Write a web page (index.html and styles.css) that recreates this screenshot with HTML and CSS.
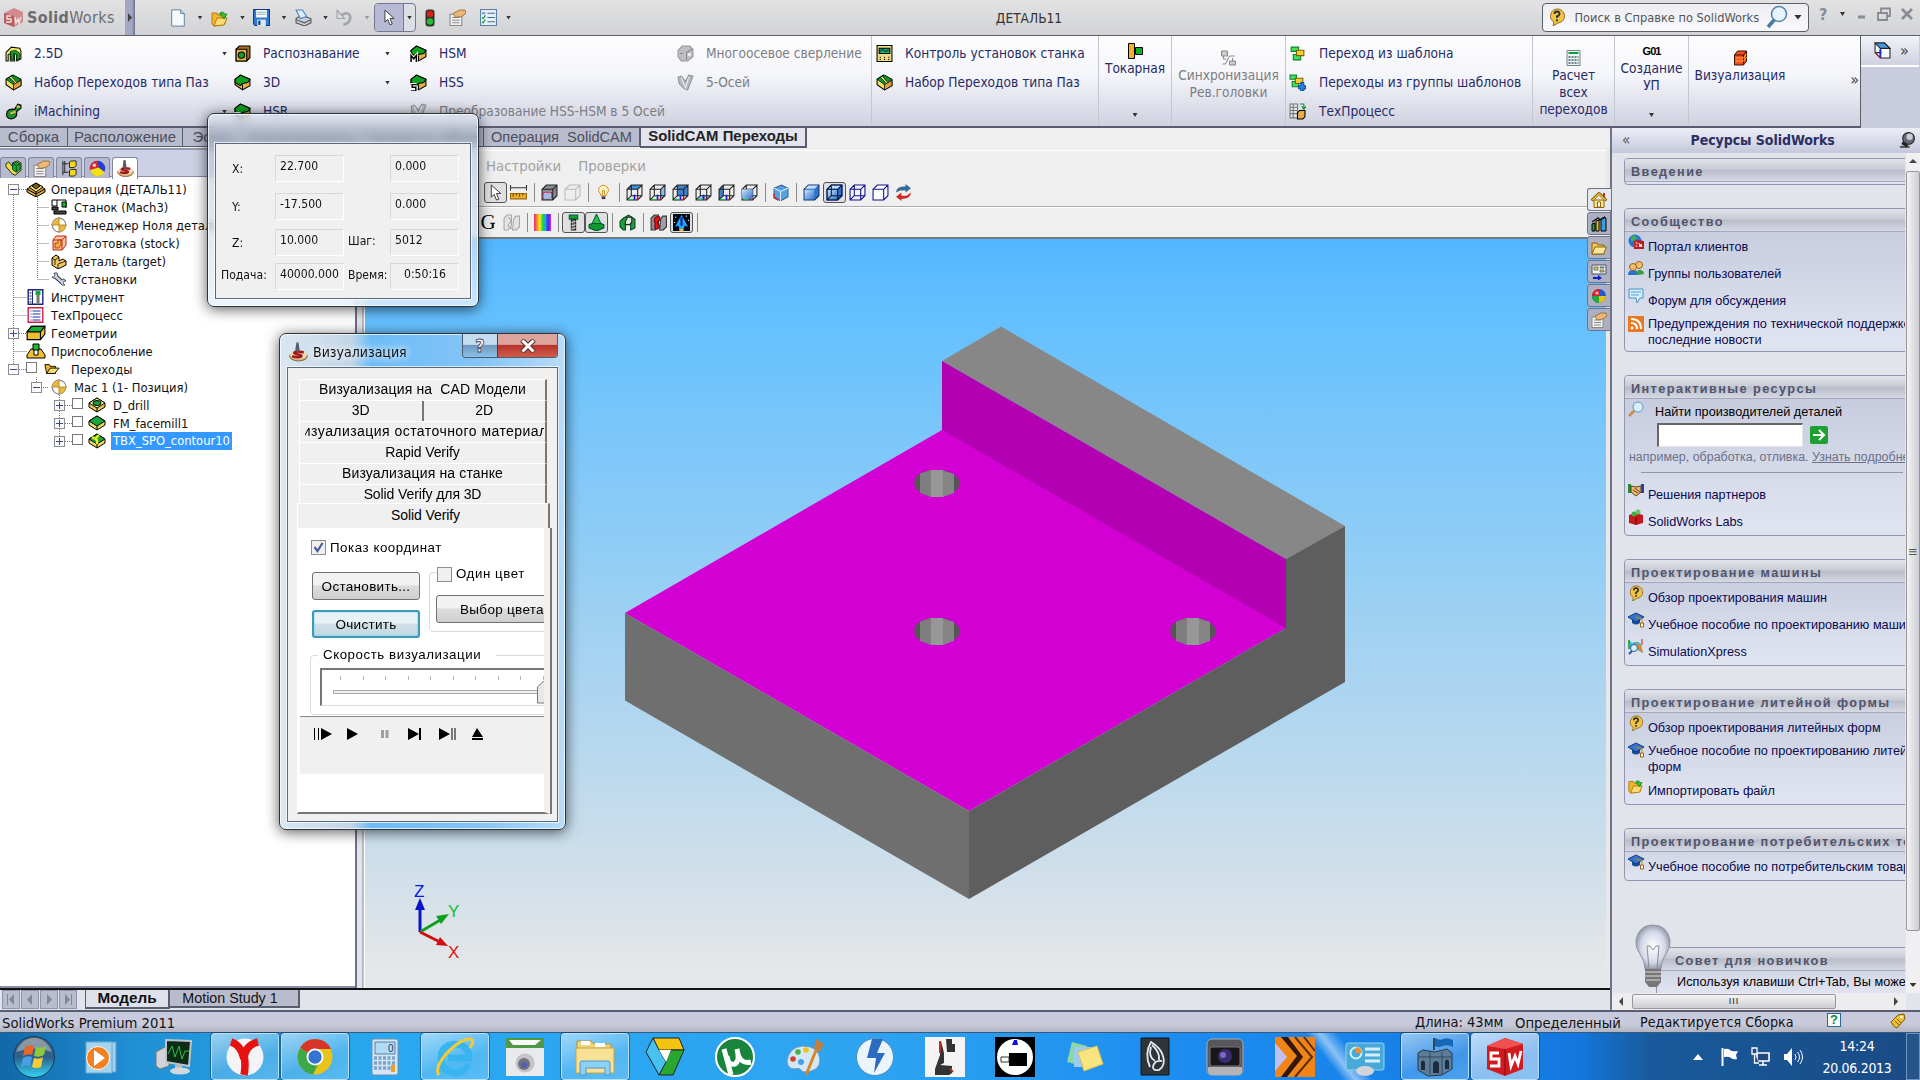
FILE: index.html
```html
<!DOCTYPE html>
<html lang="ru">
<head>
    <meta charset="UTF-8">
    <meta name="viewport" content="width=device-width, initial-scale=1.0">
    <title>ДЕТАЛЬ11</title>
    <link rel="stylesheet" href="styles.css">
</head>
<body>
    <!-- icons -->
    <svg class="sprite">
        <defs>
            <linearGradient id="gBlue" x1="0" y1="0" x2="1" y2="1"><stop offset="0" stop-color="#cfe6fb"/><stop offset="1" stop-color="#2f74c8"/></linearGradient>
            <linearGradient id="gTop" x1="0" y1="0" x2="0" y2="1"><stop offset="0" stop-color="#56646f"/><stop offset=".5" stop-color="#2b5f8c"/><stop offset="1" stop-color="#35d6f5"/></linearGradient>
            <linearGradient id="gRain"><stop offset="0" stop-color="#e0208a"/><stop offset=".2" stop-color="#ff9a10"/><stop offset=".35" stop-color="#f4f020"/><stop offset=".5" stop-color="#30d040"/><stop offset=".68" stop-color="#20a0f0"/><stop offset=".82" stop-color="#3030e0"/><stop offset="1" stop-color="#e020e0"/></linearGradient>
            <radialGradient id="gBulb"><stop offset="0" stop-color="#fff"/><stop offset=".7" stop-color="#d4d8e8"/><stop offset="1" stop-color="#9aa0b0"/></radialGradient>
        </defs>
        <symbol id="cam" viewBox="0 0 16 16"><path d="M1 5l5-4 9 4v6l-7 4-7-5z" fill="#e8b040" stroke="#000"/><path d="M1 5l5-4 9 4-2 3-5 1-2 2-5-3z" fill="#12a020" stroke="#000"/><path d="M8 10v5" stroke="#000"/></symbol>
        <symbol id="cam25" viewBox="0 0 16 16"><path d="M1 7l5-5 8 1 1 3v7l-4 2V8L9 7v8H5V8L3 9v6H1z" fill="#f3ec70" stroke="#111"/><path d="M5 6l5-1 4 3v5l-3 1V9L8 8v6H6z" fill="#12a020" stroke="#111" stroke-width=".7"/></symbol>
        <symbol id="slot" viewBox="0 0 16 16"><path d="M1 5l6-4 8 4v6l-7 4-7-5z" fill="#f3e060" stroke="#000"/><path d="M1 5l3-2 5 5-1 2zM6 2l2-1 7 4-4 3z" fill="#109030" stroke="#000" stroke-width=".6"/><path d="M8 10v5l7-4V6z" fill="#e0a040" stroke="#000" stroke-width=".7"/></symbol>
        <symbol id="imach" viewBox="0 0 16 16"><path d="M2 8q2-3 7-2l3-5 3 1v3l-4 3q1 6-5 7-6 0-4-7z" fill="#18902c" stroke="#000"/><path d="M5 10l5-2M11 3l3 1" stroke="#e8b848" stroke-width="2"/></symbol>
        <symbol id="recog" viewBox="0 0 16 16"><path d="M2 4l3-3h10v11l-3 3H2z" fill="#a8701c" stroke="#000"/><path d="M2 4h10v11H2z" fill="#e8ad48" stroke="#000"/><circle cx="7" cy="9.500" r="3" fill="#12a020" stroke="#000"/></symbol>
        <symbol id="camM" viewBox="0 0 16 16"><use href="#cam"/><path d="M1 16v-6l2.500 3L6 10v6" stroke="#fff" stroke-width="3" fill="none"/><path d="M1 16v-6l2.500 3L6 10v6" stroke="#000" stroke-width="1.400" fill="none"/></symbol>
        <symbol id="camS" viewBox="0 0 16 16"><use href="#cam"/><path d="M6 10H2v2.500h3.500V16H1" stroke="#fff" stroke-width="3" fill="none"/><path d="M6 10H2v2.500h3.500V16H1" stroke="#000" stroke-width="1.300" fill="none"/></symbol>
        <symbol id="gcam" viewBox="0 0 16 16"><path d="M1 5l4-4h7l3 3v7l-5 4H4l-3-4z" fill="#bdbfc2" stroke="#94969a"/><path d="M9 7l5-3M9 7v7M3 8h3" stroke="#87898d"/><circle cx="11.500" cy="9" r="1.500" fill="#eee"/></symbol>
        <symbol id="gaxis" viewBox="0 0 16 16"><path d="M1 3l3-1 4 5 3-6 4 1-3 8-2 5-3-1-5-5z" fill="#b9bbc0" stroke="#8f9196"/><path d="M4 3l4 10 3-10" stroke="#e8e8ec" fill="none"/></symbol>
        <symbol id="panel" viewBox="0 0 16 16"><path d="M1 .5h14v15H1z" fill="#f0dc80" stroke="#000"/><path d="M3 3h10v5H3z" fill="#18b060" stroke="#000"/><path d="M4 11v3M8 11v3M12 11v3" stroke="#000" stroke-dasharray="1 1"/><path d="M4 6l2-2 3 2 3-1" stroke="#034" fill="none"/></symbol>
        <symbol id="turn" viewBox="0 0 16 16"><path d="M1 0.500h6v15H1z" fill="#f0b030" stroke="#000"/><path d="M8 4.500h7v7H8z" fill="#10b020" stroke="#000"/></symbol>
        <symbol id="sync" viewBox="0 0 16 16"><path d="M1 1h6v5H1zM9 11h6v4H9z" fill="#ccc" stroke="#888"/><path d="M3 6v3h3M14 6H9l-4 8H2M12 8v3" stroke="#888" fill="none"/></symbol>
        <symbol id="tpl" viewBox="0 0 16 16"><path d="M2 2h7v4H2zM4 9h7v5H4z" fill="#40e060" stroke="#108030"/><path d="M7 5h7v5H7z" fill="#f0d030" stroke="#806000"/></symbol>
        <symbol id="tplg" viewBox="0 0 16 16"><path d="M1 1h6v4H1zM3 7h6v5H3z" fill="#40e060" stroke="#108030"/><path d="M6 4h7v5H6z" fill="#f0d030" stroke="#806000"/><path d="M9 11h2V8h3v3h2v3h-2v2h-3v-2H9z" fill="#2080e0" stroke="#02408a" stroke-width=".8"/></symbol>
        <symbol id="tech" viewBox="0 0 16 16"><path d="M1 1h7v13H1zM1 4h7M1 7h7M1 10h7M4 1v13" fill="#e4e6ea" stroke="#777"/><path d="M8 9l2-2h5v6l-2 2H8z" fill="#e8ad48" stroke="#000"/><path d="M10 1h4v4M12 3l2 3 2-3" stroke="#109030" fill="none"/></symbol>
        <symbol id="calc" viewBox="0 0 16 16"><path d="M1.500.500h13v15h-13z" fill="#eef4f4" stroke="#70888c"/><path d="M3 2h10v2H3z" fill="#109a40"/><path d="M3 7h10M3 10h10M3 13h10" stroke="#406070" stroke-width="1.600" stroke-dasharray="2 1"/></symbol>
        <symbol id="vis" viewBox="0 0 16 16"><path d="M2 5l3-4h9v10l-3 4H2z" fill="#f05020" stroke="#401000"/><path d="M2 5h9l3-4M11 5v10" stroke="#401000" fill="none"/><path d="M3 8h8l3-4M3 11h8l3-4" stroke="#ffb030" fill="none"/></symbol>
        <symbol id="doc" viewBox="0 0 16 20"><path d="M1 1h10l4 4v14H1z" fill="#f4faff" stroke="#5a7896"/><path d="M11 1v4h4" fill="#c8dcec" stroke="#5a7896"/></symbol>
        <symbol id="open" viewBox="0 0 18 18"><path d="M1 4h5l1 2h7v9l-11 2-2-2z" fill="#f0b830" stroke="#b07808"/><path d="M3 17l3-8h10l-3 7z" fill="#fbdc70" stroke="#b07808"/><path d="M8 5q3-4 6 0h2l-3 5-4-5h2" fill="#30c030" stroke="#107010" stroke-width=".6"/></symbol>
        <symbol id="save" viewBox="0 0 16 16"><path d="M.5.500h15v15H2l-1.500-1.500z" fill="#2f7cd0" stroke="#103c80"/><path d="M3 1h10v7H3z" fill="#fff"/><path d="M4 3h8M4 5h8" stroke="#8ab"/><path d="M4 10h8v6H4z" fill="#dde8f4"/><path d="M5 11h2v4H5z" fill="#123a70"/></symbol>
        <symbol id="print" viewBox="0 0 16 16"><path d="M1 9l5-3 9 3v4l-6 3-8-3z" fill="#c8ccd4" stroke="#555"/><path d="M5 9L1 1h6l4 6z" fill="#d8ecff" stroke="#5080b0"/><path d="M1 10l8 3 6-3" stroke="#555" fill="none"/></symbol>
        <symbol id="undo" viewBox="0 0 16 16"><path d="M7 15q8-3 6-9-2-4-8 0" fill="none" stroke="#a2a4a8" stroke-width="2.400"/><path d="M1 1v8h7z" fill="#dcdde0" stroke="#a0a2a6"/></symbol>
        <symbol id="cursor" viewBox="0 0 12 18"><path d="M1 1v13l3-3 2.500 6 2.500-1-2.500-6H11z" fill="#fff" stroke="#333"/></symbol>
        <symbol id="light" viewBox="0 0 10 18"><rect x=".5" y=".5" width="9" height="17" rx="3" fill="#303030"/><circle cx="5" cy="5" r="3.200" fill="#e02010"/><circle cx="5" cy="12.500" r="3.200" fill="#20c030"/></symbol>
        <symbol id="props" viewBox="0 0 16 16"><path d="M1 5h11v10.500H1z" fill="#f2f2f2" stroke="#888"/><path d="M3 8h7M3 10.500h7M3 13h7" stroke="#888"/><path d="M4 4l6-3h5l1 3-4 3-6 1z" fill="#eab878" stroke="#8a5a20" stroke-width=".7"/></symbol>
        <symbol id="opts" viewBox="0 0 16 16"><path d="M.5.500h15v15H.5z" fill="#e6f0fa" stroke="#5a7ca0"/><path d="M7 4h7M7 8h7M7 12h7" stroke="#48688c"/><path d="M2 3h3v2H2z" fill="#7898c0"/><path d="M2 8l1 1 2-3M2 12l1 1 2-3" stroke="#109030" fill="none"/></symbol>
        <symbol id="qball" viewBox="0 0 16 18"><path d="M8 1a7 7 0 0 1 1 14l-5 3 1-4A7 7 0 0 1 8 1z" fill="#f2c444" stroke="#94701c"/><path d="M5.500 6q0-2.500 2.500-2.500T10.500 6Q10.500 7.500 8 8.500V10M8 11.200v2" stroke="#333" stroke-width="1.900" fill="none"/></symbol>
        <symbol id="lens" viewBox="0 0 22 24"><path d="M9 14l-7 8" stroke="#4a7a9c" stroke-width="3.500"/><circle cx="13" cy="9" r="7.500" fill="#e6f4fc" stroke="#5888a8" stroke-width="1.600"/></symbol>
        <symbol id="iso" viewBox="0 0 16 16"><path d="M1 1h9l5 5v9H6l-5-5z" fill="#f8fbff" stroke="#222"/><path d="M1 1h9l5 5H6z" fill="#4898e0" stroke="#222"/><path d="M6 6v9M1 10h6" fill="none" stroke="#222"/><path d="M6 7v8" stroke="#1030e0" stroke-width="1.800"/><path d="M1 10l5 5" stroke="#c02020"/></symbol>
        <symbol id="base" viewBox="0 0 16 16"><path d="M1 5h10v10H1zM1 5l4-4h10l-4 4M15 1v10l-4 4M5 1v10h10M5 11l-4 4" fill="none" stroke="#222" stroke-width="1"/><path d="M8 10v5" stroke="#1020e0" stroke-width="1.600"/><path d="M2 14.500h5" stroke="#10c040"/><path d="M9 14.500l3-1" stroke="#e02020"/></symbol>
        <symbol id="vTop" viewBox="0 0 16 16"><path d="M1 5l4-4h10l-4 4z" fill="#3f8fdc"/><use href="#base"/></symbol>
        <symbol id="vRight" viewBox="0 0 16 16"><path d="M11 5l4-4v10l-4 4z" fill="#8cc0ee"/><use href="#base"/></symbol>
        <symbol id="vBack" viewBox="0 0 16 16"><path d="M5 1h10v10H5z" fill="#3f80c8"/><use href="#base"/></symbol>
        <symbol id="vBot" viewBox="0 0 16 16"><path d="M1 15l4-4h10l-4 4z" fill="#8cc0ee"/><use href="#base"/></symbol>
        <symbol id="vLeft" viewBox="0 0 16 16"><path d="M1 5l4-4v10l-4 4z" fill="#3f80c8"/><use href="#base"/></symbol>
        <symbol id="vFront" viewBox="0 0 16 16"><use href="#base"/><path d="M1 5h10v9H1z" fill="url(#gBlue)"/></symbol>
        <symbol id="shade" viewBox="0 0 16 16"><path d="M1 5l4-4h10v10l-4 4H1z" fill="#2f74c8" stroke="#10306c"/><path d="M1.500 5.500h9v9h-9z" fill="url(#gBlue)"/><path d="M2 4.500l3-3h9l-3 3z" fill="#c4e0f8"/></symbol>
        <symbol id="shadeE" viewBox="0 0 16 16"><use href="#shade"/><path d="M1 5h10v10H1zM1 5l4-4h10v10l-4 4M11 5l4-4M5 1v10h10M5 11l-4 4" fill="none" stroke="#08184c"/></symbol>
        <symbol id="wire" viewBox="0 0 16 16"><path d="M1 5h10v10H1zM1 5l4-4h10v10l-4 4M11 5l4-4M5 1v10h10M5 11l-4 4" fill="#fff" fill-opacity=".6" stroke="#10108c"/></symbol>
        <symbol id="hid" viewBox="0 0 16 16"><path d="M1 5h10v10H1zM1 5l4-4h10v10l-4 4M11 5l4-4" fill="#fff" stroke="#10108c"/></symbol>
        <symbol id="stockR" viewBox="0 0 16 16"><path d="M1 5l4-4h10v10l-4 4H1z" fill="#8a8c94" stroke="#222"/><path d="M1 5h10v10M11 5l4-4" stroke="#222" fill="none"/><path d="M2 8h8v6H2z" fill="#a8b8e0"/><path d="M2 8h8l4-3M2 14V8M10 8v6" stroke="#d02040" stroke-dasharray="2 1" fill="none"/></symbol>
        <symbol id="stockG" viewBox="0 0 16 16"><path d="M1 5h10v10H1zM1 5l4-4h10v10l-4 4M11 5l4-4" fill="#eee" stroke="#bbb"/></symbol>
        <symbol id="isoB" viewBox="0 0 16 16"><path d="M2 4l7-3 6 3v8l-7 4-6-4z" fill="#5aa0dc" stroke="#2a6098"/><path d="M2 4l6 3 7-3M8 7v9" stroke="#d4ecff" fill="none"/><path d="M2 9v4l4 2" fill="none" stroke="#c03040" stroke-width="1.500"/></symbol>
        <symbol id="ruler" viewBox="0 0 16 16"><path d="M.5 1v5M15.500 1v5M1 3.500h14" stroke="#333"/><path d="M.5 9h15v5H.5z" fill="#eeb028" stroke="#9a6808"/><path d="M3 9v3M6 9v2M9 9v3M12 9v2" stroke="#704800"/></symbol>
        <symbol id="bulb" viewBox="0 0 16 18"><path d="M5 12q0-2-2-4a5.200 5.200 0 1 1 10 0q-2 2-2 4z" fill="#fff4c0" stroke="#c88c20"/><path d="M7 11V7h2v4" fill="none" stroke="#c88c20"/><path d="M6 13h4v3H6z" fill="#444"/></symbol>
        <symbol id="swap" viewBox="0 0 16 16"><path d="M1 8q0-6 9-6V0l5 4-5 4V6H5z" fill="#386c98"/><path d="M15 8q0 6-9 6v2l-5-4 5-4v3h5z" fill="#d02828"/></symbol>
        <symbol id="red" viewBox="0 0 16 16"><path d="M1 4l3-3h4v10l-3 4H1z" fill="#8e8e94" stroke="#333"/><path d="M10 5l2-3h3.500v10l-3 3H9z" fill="#a0a0a4" stroke="#333"/><path d="M5 3q6-2 4 3-4 2 0 5-1 4-4 3-1-3 0-5-2-3 0-6z" fill="#e01818" stroke="#700"/></symbol>
        <symbol id="gsim" viewBox="0 0 16 16"><path d="M1 4l3-3h4v10l-3 4H1zM10 5l2-3h3.500v10l-3 3H9zM5 3q4 3 1 6t3 5" fill="#e4e4e4" stroke="#a8a8a8"/></symbol>
        <symbol id="bolt" viewBox="0 0 16 16"><path d="M4 1h8v4H4z" fill="#10a030" stroke="#054"/><path d="M6 5h4v10H6z" fill="#666" stroke="#222"/><path d="M6 8l4-1M6 11l4-1M6 14l4-1" stroke="#ccc"/></symbol>
        <symbol id="cone" viewBox="0 0 16 16"><path d="M8 0l5 11H3z" fill="#28c040" stroke="#064"/><path d="M1 10l3-1h8l3 1v3l-7 3-7-3z" fill="#109830" stroke="#053"/></symbol>
        <symbol id="mold" viewBox="0 0 16 16"><path d="M1 7l3-3 5-3 6 4v8l-4 2V9H6v6H4l-3-3z" fill="#20a038" stroke="#042"/><path d="M6 7l2-4h4v5l-2 2H6z" fill="#e4e4e4" stroke="#222"/></symbol>
        <symbol id="rocket" viewBox="0 0 16 16"><path d="M0 0h16v16H0z" fill="#000814"/><path d="M8 1l3 5 3 6-3-1-1 3H6l-1-3-3 1 3-6z" fill="#20a8f8"/><path d="M8 3v8" stroke="#1020a0" stroke-width="2"/><path d="M2 3h1M12 2h1M14 6h1M1 8h1" stroke="#fff"/><path d="M6 14h4v2H6z" fill="#f8b030"/></symbol>
        <symbol id="house" viewBox="0 0 16 16"><path d="M3 8h10v7.500H3z" fill="#fbe48c" stroke="#8a6410"/><path d="M.5 8.500L8 1.500l7.500 7" fill="none" stroke="#8a6410" stroke-width="3"/><path d="M1.500 8L8 2l6.500 6" fill="none" stroke="#f0c030" stroke-width="1.400"/><path d="M12 1h2v4h-2z" fill="#b03020"/><path d="M6.500 10h3v5h-3z" fill="#fff" stroke="#8a6410"/></symbol>
        <symbol id="books" viewBox="0 0 16 16"><path d="M1 8l3-1v8H1z" fill="#20a040" stroke="#000"/><path d="M5 5l3-1v11H5z" fill="#e8c030" stroke="#000"/><path d="M10 3l4-2 1 2v12h-5z" fill="#38a0e0" stroke="#000"/><path d="M1 6l6-4 2 2 5-3" stroke="#111" stroke-width="1.500" fill="none"/></symbol>
        <symbol id="folder" viewBox="0 0 16 16"><path d="M1 3h5l1 2h6v9H1z" fill="#f4c850" stroke="#8a6410"/><path d="M1 14l3-7h11.500l-3 7z" fill="#fce898" stroke="#8a6410"/></symbol>
        <symbol id="pal" viewBox="0 0 16 16"><path d="M1 1h14v9H1z" fill="#f4f6fa" stroke="#456"/><path d="M3 3h4v3H3zM9 3h4v1H9zM9 6h4v2H9z" fill="#e8d850" stroke="#345" stroke-width=".7"/><path d="M2 13h5v-2l4 3-4 2.500V15H2z" fill="#1020c0"/></symbol>
        <symbol id="ball" viewBox="0 0 16 16"><circle cx="8" cy="8" r="7" fill="#2858d0"/><path d="M8 8V1a7 7 0 0 0-7 7z" fill="#e02020"/><path d="M8 8H1a7 7 0 0 0 7 7z" fill="#20a838"/><path d="M8 8v7a7 7 0 0 0 7-7z" fill="#e8c020"/><circle cx="6" cy="5" r="1.600" fill="#fff" opacity=".7"/></symbol>
        <symbol id="ball3" viewBox="0 0 16 16"><circle cx="8" cy="8" r="7.300" fill="#2040d0"/><path d="M9 7L8 .7A7.300 7.300 0 0 0 1 9z" fill="#e82020"/><path d="M9 7L.8 9.500q2 6 7.500 6 5-1 6.500-4z" fill="#f4e010"/><circle cx="5" cy="5" r="1.600" fill="#fff" opacity=".8"/></symbol>
        <symbol id="solidcam" viewBox="0 0 18 18"><ellipse cx="9" cy="13" rx="8.300" ry="4.500" fill="#d8b880" stroke="#8a6840"/><ellipse cx="9" cy="11.500" rx="8" ry="4" fill="#f0dcc0"/><path d="M14 9.500q-8-2-9 .5 1 1 5 1.500 3 1 1 2-3 1-8-.5" fill="none" stroke="#a01818" stroke-width="2.400"/><path d="M7 0h2l1 7-2 3-2-3z" fill="#555c64"/></symbol>
        <symbol id="cfg" viewBox="0 0 18 18"><path d="M2 1v15M2 4h6M2 13h6M4 1v12" stroke="#222" fill="none"/><path d="M9 2l2-1h5v5l-2 2H9zM9 11l2-1h5v5l-2 2H9z" fill="#f4d820" stroke="#222"/></symbol>
        <symbol id="asm" viewBox="0 0 18 18"><path d="M1 4l3-2 4 5V3l5-2 4 2v8l-6 5-3-1-7-8z" fill="#f0d840" stroke="#222"/><path d="M8 4l4-2 4 2v6l-4 3-4-3z" fill="#18a838" stroke="#042"/><path d="M8 4l4 2v6M12 6l4-2" fill="none" stroke="#042"/></symbol>
        <symbol id="oper" viewBox="0 0 20 16"><path d="M1 8l9-5 9 5v3l-9 5-9-5z" fill="#d8a840" stroke="#000"/><path d="M1 8l9 5 9-5" stroke="#000" fill="none"/><path d="M3 6l7-4 7 4-7 5z" fill="#f4dc70" stroke="#000"/><path d="M6 5l4-3 4 3-4 3z" fill="#806010" stroke="#000"/><path d="M10 11v5" stroke="#000"/></symbol>
        <symbol id="machine" viewBox="0 0 16 16"><path d="M1 1h5v6H1zM6 1h9v8" fill="#fff" stroke="#000"/><path d="M11 3h4v5h-4z" fill="#10c030" stroke="#000"/><path d="M1 8h6v3H1zM3 12h12v3H3z" fill="#444" stroke="#000"/></symbol>
        <symbol id="zero" viewBox="0 0 14 14"><circle cx="7" cy="7" r="6" fill="#fffdf4" stroke="#8a8a94"/><path d="M7 7V1a6 6 0 0 0-6 6zM7 7v6a6 6 0 0 0 6-6z" fill="#e8b838"/><path d="M7 0v14M0 7h14" stroke="#a88020" stroke-width=".7"/></symbol>
        <symbol id="stock" viewBox="0 0 16 16"><path d="M2 5l3-4h10v9l-4 5H2z" fill="#f8c8a0" stroke="#c02010"/><path d="M2 5h9v10M11 5l4-4" fill="none" stroke="#c02010"/><path d="M4 8h3V5h3v5l-2 3H4z" fill="#f0b040" stroke="#c02010" stroke-width=".8"/></symbol>
        <symbol id="target" viewBox="0 0 16 16"><path d="M1 5l4-3 3 2v4l4-2 3 2v4l-8 4-6-4z" fill="#f0cc60" stroke="#000"/><path d="M1 5l3 2v5M4 7l4-3M7 11l8-3M7 11v5" stroke="#000" fill="none" stroke-width=".8"/></symbol>
        <symbol id="wrench" viewBox="0 0 16 16"><path d="M4 5l8 7" stroke="#333" stroke-width="4.500"/><path d="M6 2q2 2-1 5-3 1-4-1l2 0 1-2-1-2zM15 10l-2 0-1 2 2 2q-3 1-4-1t2-5q2 0 3 2z" fill="#c8d4e4" stroke="#333" stroke-width=".8"/><path d="M4 5l8 7" stroke="#c8d4e4" stroke-width="2.500"/></symbol>
        <symbol id="tool" viewBox="0 0 16 16"><path d="M.7.700h14.600v14.600H.7z" fill="#fff" stroke="#1c2480" stroke-width="1.400"/><path d="M5 1v14" stroke="#1c2480"/><path d="M2 4h2M2 7h2M2 10h2M2 13h2" stroke="#111"/><path d="M8 2h5v4H8z" fill="#18a838"/><path d="M9 6h3v8l-1.500 1L9 14z" fill="#777"/></symbol>
        <symbol id="list" viewBox="0 0 16 16"><path d="M.7.700h14.600v14.600H.7z" fill="#fff" stroke="#d02040" stroke-width="1.400"/><path d="M3 4h1M3 7h1M3 10h1M3 13h1M5 4h8M5 7h8M5 10h8M5 13h8" stroke="#1c2cb0"/></symbol>
        <symbol id="geom" viewBox="0 0 18 14"><path d="M1 6l4-5h12v7l-4 5H1z" fill="#e8c030" stroke="#000"/><path d="M1 6l4-5h12l-4 5z" fill="#18b030" stroke="#000"/><path d="M13 6v7" stroke="#000"/></symbol>
        <symbol id="fix" viewBox="0 0 20 16"><path d="M1 15v-3l4-6h3v6h4V6h3l4 6v3z" fill="#f0c030" stroke="#000"/><path d="M7 1h6v6H7z" fill="#18c030" stroke="#000"/></symbol>
        <symbol id="fopen" viewBox="0 0 18 14"><path d="M1 2h5l1 2h6v8H3z" fill="#e8b830" stroke="#000"/><path d="M3 12l4-6h10l-5 6z" fill="#fce070" stroke="#000"/></symbol>
        <symbol id="drill" viewBox="0 0 18 16"><path d="M1 6l8-5 8 5v4l-8 5-8-5z" fill="#e8c850" stroke="#000"/><path d="M1 6l8-5 8 5-8 5z" fill="#f4ec90" stroke="#000"/><ellipse cx="9" cy="6" rx="4" ry="2.500" fill="#18a030" stroke="#000"/><path d="M9 11v4" stroke="#000"/></symbol>
        <symbol id="face" viewBox="0 0 18 16"><path d="M1 6l8-5 8 5v4l-8 5-8-5z" fill="#f0d860" stroke="#000"/><path d="M1 6l8-5 8 5-8 5z" fill="#18a840" stroke="#000"/><path d="M9 11v4" stroke="#000"/></symbol>
        <symbol id="contour" viewBox="0 0 18 16"><use href="#face"/><path d="M4 4l5 3v4M11 2L7 6" stroke="#f4f020" stroke-width="2.200" fill="none"/></symbol>
        <symbol id="portal" viewBox="0 0 16 16"><circle cx="7" cy="7" r="6.500" fill="#2878c8"/><path d="M3 3q4-3 6 1-3 4-6 3z" fill="#40b050"/><path d="M6 7l4-1 6 1v8H6z" fill="#b81c20"/><path d="M7.500 9h2M7.500 12h2M11 9l1 4 1-3 1 3" stroke="#fff" fill="none"/></symbol>
        <symbol id="users" viewBox="0 0 16 16"><path d="M0 14q0-5 5-5t5 5z" fill="#2870c8"/><path d="M8 12q2-4 5-3 3 1 3 4l-6 1z" fill="#30a040"/><circle cx="11" cy="4" r="3.500" fill="#f0c070" stroke="#a06010"/><circle cx="5" cy="6" r="3.500" fill="#f0c070" stroke="#a06010"/></symbol>
        <symbol id="chat" viewBox="0 0 16 16"><path d="M1 1h14v9h-3l-3 5-1-5H1z" fill="#d4ecfc" stroke="#4a94cc"/><path d="M3 4h10M3 7h8" stroke="#5aa0d4"/></symbol>
        <symbol id="rss" viewBox="0 0 16 16"><path d="M0 0h16v16H0z" fill="#ea7820"/><circle cx="4" cy="12" r="1.500" fill="#fff"/><path d="M3 7q6 0 6 6M3 3q10 0 10 10" stroke="#fff" stroke-width="2" fill="none"/></symbol>
        <symbol id="find" viewBox="0 0 16 16"><path d="M1 15l6-6" stroke="#c89040" stroke-width="2.500"/><circle cx="10" cy="6" r="5" fill="#d8f0fc" stroke="#6098c0"/></symbol>
        <symbol id="hands" viewBox="0 0 16 14"><path d="M0 1h3v9H0z" fill="#20903c"/><path d="M13 1h3v9h-3z" fill="#2048b0"/><path d="M3 3l5 1 5-1v6l-5 4-5-4z" fill="#e8b878" stroke="#6a4010"/><path d="M5 7l5 3M7 5l5 4" stroke="#6a4010"/></symbol>
        <symbol id="labs" viewBox="0 0 16 16"><path d="M1 6l7-2 7 2v8l-7 2-7-2z" fill="#c8181c"/><path d="M8 8v8" stroke="#700"/><circle cx="6" cy="5" r="2.500" fill="#38b048"/><circle cx="10" cy="3" r="2.500" fill="#60c868"/></symbol>
        <symbol id="cap" viewBox="0 0 16 16"><path d="M4 6v5q4 3 8 0V6z" fill="#1c4c9c"/><path d="M0 5l8-4 8 4-8 5z" fill="#3474cc" stroke="#123a7a"/><path d="M8 5l6 2v6" stroke="#d09020" fill="none"/><path d="M12.500 11h3v4h-3z" fill="#fff" stroke="#a06010"/></symbol>
        <symbol id="sim" viewBox="0 0 16 16"><path d="M1 1l3 3q5-3 9 1l2 9-4-2Q6 6 2 10z" fill="#40b8c8"/><path d="M8 4q5 0 7 10l-4-3z" fill="#f08020"/><path d="M1 1v9" stroke="#10a030" stroke-width="1.600"/><path d="M14 0v6" stroke="#c02020"/><circle cx="6" cy="9" r="3.500" fill="#d8f0fc" stroke="#2858a0"/><path d="M1 15l3-3" stroke="#2858a0" stroke-width="2"/></symbol>
        <symbol id="pin" viewBox="0 0 16 16"><path d="M1 14h9" stroke="#555" stroke-width="2"/><circle cx="9" cy="6" r="5.500" fill="#666a74" stroke="#222"/><circle cx="10" cy="4.500" r="3" fill="#c8ccd4"/><path d="M3 10l5 3" stroke="#222" stroke-width="3"/></symbol>
    </svg>

    <div class="titlebar">
        <div class="logo">
            <svg width="21" height="21" viewBox="0 0 21 21"><path d="M1 6l10-5 9 4v10l-9 5-10-4z" fill="#d08c90"/><path d="M1 6l10 3v11L1 16z" fill="#b85c62"/><path d="M8 9H4v3h4v3H3M12 10l1 6 2-4 1 4 2-6" stroke="#f4e0e0" stroke-width="1.400" fill="none"/></svg>
            <span><b>Solid</b>Works</span>
        </div>
        <div class="grip"><i class="ar"></i></div>
        <div class="quick">
            <svg width="16" height="18"><use href="#doc"/></svg><i class="dd"></i>
            <svg width="18" height="18"><use href="#open"/></svg><i class="dd"></i>
            <svg width="17" height="17"><use href="#save"/></svg><i class="dd"></i>
            <svg width="17" height="17"><use href="#print"/></svg><i class="dd"></i>
            <svg width="17" height="17"><use href="#undo"/></svg><i class="dd dim"></i>
        </div>
        <div class="select"><span><svg width="11" height="17"><use href="#cursor"/></svg></span><em><i class="dd"></i></em></div>
        <div class="quick2">
            <svg width="10" height="18"><use href="#light"/></svg>
            <svg width="17" height="17"><use href="#props"/></svg>
            <svg width="17" height="17"><use href="#opts"/></svg>
            <i class="dd"></i>
        </div>
        <div class="doc-title">ДЕТАЛЬ11</div>
        <div class="search"><svg width="16" height="18"><use href="#qball"/></svg><span>Поиск в Справке по SolidWorks</span><svg width="22" height="24"><use href="#lens"/></svg><i class="dd"></i></div>
        <div class="winbtn"><b>?</b><i class="dd"></i>
            <svg width="10" height="14" viewBox="0 0 10 14"><path d="M1 10h7" stroke="#888a96" stroke-width="3"/></svg>
            <svg width="14" height="14" viewBox="0 0 14 14"><path d="M4 5V1.500h9V9H10M1 6h9v7H1z" fill="none" stroke="#888a96" stroke-width="1.800"/></svg>
            <svg width="12" height="12" viewBox="0 0 12 12"><path d="M1 1l10 10M11 1L1 11" stroke="#888a96" stroke-width="2.600"/></svg>
        </div>
    </div>

    <div class="ribbon-row">
        <div class="ribbon">
            <div class="col c1">
                <div class="cmd"><svg><use href="#cam25"/></svg><span>2.5D</span><i class="dd"></i></div>
                <div class="cmd"><svg><use href="#slot"/></svg><span>Набор Переходов типа Паз</span></div>
                <div class="cmd"><svg><use href="#imach"/></svg><span>iMachining</span><i class="dd"></i></div>
            </div>
            <div class="col c2">
                <div class="cmd"><svg><use href="#recog"/></svg><span>Распознавание</span><i class="dd"></i></div>
                <div class="cmd"><svg><use href="#cam"/></svg><span>3D</span><i class="dd"></i></div>
                <div class="cmd"><svg><use href="#camS"/></svg><span>HSR</span></div>
            </div>
            <div class="col c3">
                <div class="cmd"><svg><use href="#camM"/></svg><span>HSM</span></div>
                <div class="cmd"><svg><use href="#camS"/></svg><span>HSS</span></div>
                <div class="cmd off"><svg><use href="#gaxis"/></svg><span>Преобразование HSS-HSM в 5 Осей</span></div>
            </div>
            <div class="col c4">
                <div class="cmd off"><svg><use href="#gcam"/></svg><span>Многоосевое сверление</span></div>
                <div class="cmd off"><svg><use href="#gaxis"/></svg><span>5-Осей</span></div>
            </div>
            <div class="col c5 sep">
                <div class="cmd"><svg><use href="#panel"/></svg><span>Контроль установок станка</span></div>
                <div class="cmd"><svg><use href="#slot"/></svg><span>Набор Переходов типа Паз</span></div>
            </div>
            <div class="big sep c6"><svg><use href="#turn"/></svg><span>Токарная</span><i class="dd"></i></div>
            <div class="big low sep c7 off"><svg><use href="#sync"/></svg><span>Синхронизация<br>Рев.головки</span></div>
            <div class="col sep c8">
                <div class="cmd"><svg><use href="#tpl"/></svg><span>Переход из шаблона</span></div>
                <div class="cmd"><svg><use href="#tplg"/></svg><span>Переходы из группы шаблонов</span></div>
                <div class="cmd"><svg><use href="#tech"/></svg><span>ТехПроцесс</span></div>
            </div>
            <div class="big low sep c9"><svg><use href="#calc"/></svg><span>Расчет<br>всех<br>переходов</span></div>
            <div class="big sep c10"><strong>G01</strong><span>Создание<br>УП</span><i class="dd"></i></div>
            <div class="big low sep c11"><svg><use href="#vis"/></svg><span>Визуализация</span></div>
            <div class="more">»</div>
        </div>
        <div class="mini"><div class="mini-in"><svg width="17" height="17"><use href="#iso"/></svg><span>»</span></div></div>
    </div>

    <div class="main">
        <div class="work">
            <div class="tabs">
                <span class="t1">Сборка</span><span class="t2">Расположение</span><span class="t3">Эскиз</span><span class="t4">Анализировать</span><span class="t5">Продукты Office</span><span class="t6">Операция&nbsp; SolidCAM</span><span class="on">SolidCAM Переходы</span>
            </div>
            <div class="panes">
                <div class="left">
                    <div class="ptabs">
                        <span><svg><use href="#asm"/></svg></span><span><svg><use href="#props"/></svg></span><span><svg><use href="#cfg"/></svg></span><span><svg><use href="#ball3"/></svg></span><span class="on"><svg><use href="#solidcam"/></svg></span>
                    </div>
                    <div class="tree">
                        <svg class="guides" width="120" height="280" viewBox="0 0 120 280"><path d="M13.500 14v180M37.500 16v86M19 12.500h7M13.500 120.500h13M13.500 138.500h13M19 156.500h7M13.500 174.500h13M19 192.500h7M37.500 30.500h12M37.500 48.500h12M37.500 66.500h12M37.500 84.500h12M37.500 102.500h12M36.500 200v6M43 210.500h6M59.500 218v44M65 228.500h7M65 246.500h7M65 264.500h7"/></svg>
                        <div class="row"><i class="bx m"></i><svg class="i20"><use href="#oper"/></svg><span>Операция (ДЕТАЛЬ11)</span></div>
                        <div class="row l2"><svg><use href="#machine"/></svg><span>Станок (Mach3)</span></div>
                        <div class="row l2"><svg><use href="#zero"/></svg><span>Менеджер Ноля детали</span></div>
                        <div class="row l2"><svg><use href="#stock"/></svg><span>Заготовка (stock)</span></div>
                        <div class="row l2"><svg><use href="#target"/></svg><span>Деталь (target)</span></div>
                        <div class="row l2"><svg><use href="#wrench"/></svg><span>Установки</span></div>
                        <div class="row l1"><svg><use href="#tool"/></svg><span>Инструмент</span></div>
                        <div class="row l1"><svg><use href="#list"/></svg><span>ТехПроцесс</span></div>
                        <div class="row"><i class="bx p"></i><svg class="i20"><use href="#geom"/></svg><span>Геометрии</span></div>
                        <div class="row l1"><svg class="i20"><use href="#fix"/></svg><span>Приспособление</span></div>
                        <div class="row"><i class="bx m"></i><i class="cb"></i><svg><use href="#fopen"/></svg><span class="far">Переходы</span></div>
                        <div class="row mac"><i class="bx m"></i><svg><use href="#zero"/></svg><span>Mac 1 (1- Позиция)</span></div>
                        <div class="row l3"><i class="bx p"></i><i class="cb"></i><svg class="i18"><use href="#drill"/></svg><span>D_drill</span></div>
                        <div class="row l3"><i class="bx p"></i><i class="cb"></i><svg class="i18"><use href="#face"/></svg><span>FM_facemill1</span></div>
                        <div class="row l3"><i class="bx p"></i><i class="cb"></i><svg class="i18"><use href="#contour"/></svg><span class="sel">TBX_SPO_contour10</span></div>
                    </div>
                </div>
                <div class="split"></div>
                <div class="view">
                    <div class="menu"><span>Настройки</span><span>Проверки</span></div>
                    <div class="tools">
                        <span class="b dn"><svg class="cur"><use href="#cursor"/></svg></span><span class="b"><svg><use href="#ruler"/></svg></span><u></u>
                        <span class="b"><svg><use href="#stockR"/></svg></span><span class="b"><svg><use href="#stockG"/></svg></span><u></u>
                        <span class="b"><svg><use href="#bulb"/></svg></span><u></u>
                        <span class="b"><svg><use href="#vTop"/></svg></span><span class="b"><svg><use href="#vRight"/></svg></span><span class="b"><svg><use href="#vBack"/></svg></span><span class="b"><svg><use href="#vBot"/></svg></span><span class="b"><svg><use href="#vLeft"/></svg></span><span class="b"><svg><use href="#vFront"/></svg></span><u></u>
                        <span class="b"><svg><use href="#isoB"/></svg></span><u></u>
                        <span class="b"><svg><use href="#shade"/></svg></span><span class="b dn"><svg><use href="#shadeE"/></svg></span><span class="b"><svg><use href="#wire"/></svg></span><span class="b"><svg><use href="#hid"/></svg></span><span class="b"><svg><use href="#swap"/></svg></span>
                    </div>
                    <div class="tools second">
                        <span class="b g">G</span><span class="b"><svg><use href="#gsim"/></svg></span><u></u>
                        <span class="b"><svg viewBox="0 0 16 16"><path d="M0 0h16v16H0z" fill="url(#gRain)"/></svg></span><u></u>
                        <span class="b dn"><svg><use href="#bolt"/></svg></span><span class="b dn"><svg><use href="#cone"/></svg></span><u></u>
                        <span class="b"><svg><use href="#mold"/></svg></span><u></u>
                        <span class="b"><svg><use href="#red"/></svg></span><span class="b dn"><svg><use href="#rocket"/></svg></span><u></u>
                    </div>
                    <div class="scene">
                        <svg width="1242" height="749" viewBox="365 239 1242 749">
                            <path d="M1001 326.500L1345 526l-59 33L942 361z" fill="#878787"/>
                            <path d="M942 361l344 198v70L942 431z" fill="#b200b2"/>
                            <path d="M942 430l344 198-317 183-344-198z" fill="#d200d2"/>
                            <path d="M625 613l344 198v88L625 700.500z" fill="#6f6f6f"/>
                            <path d="M969 811l317-183v-69l59-33v156L969 899z" fill="#5e5e5e"/>
                            <g id="hole"><path d="M914 483l2-6 5-4 8-2.500 8-.5 9 .8 7 3 5 4 2 5-2 6-5 4-8 3-9 .7-8-.7-7-3-5-4z" fill="#555"/><path d="M920 473.500l11-3.500v27l-11-4z" fill="#7e7e7e"/><path d="M931 470h12v27h-12z" fill="#979797"/><path d="M943 470.500l11 3.500v19l-11 4z" fill="#858585"/></g>
                            <use href="#hole" y="148"/><use href="#hole" x="256" y="148"/>
                            <path d="M420 932v-24" stroke="#0a14c8" stroke-width="3"/><path d="M420 898l5 12h-10z" fill="#0a14c8"/>
                            <path d="M420 932l22-13" stroke="#10a020" stroke-width="3"/><path d="M449 914l-8 10-5-8z" fill="#10a020"/>
                            <path d="M420 932l22 11" stroke="#d01010" stroke-width="3"/><path d="M448 946l-12-1 4-8z" fill="#d01010"/>
                            <text x="414" y="897" class="ax" fill="#0a14e8">Z</text><text x="448" y="917" class="ax" fill="#10c030">Y</text><text x="448" y="958" class="ax" fill="#e01010">X</text>
                        </svg>
                    </div>
                </div>
            </div>
            <div class="btabs">
                <div class="nav">
                    <i><svg width="16" height="17" viewBox="0 0 16 17"><path d="M11 3v11L6 8.500zM4 3h1v11H4z"/></svg></i>
                    <i><svg width="16" height="17" viewBox="0 0 16 17"><path d="M10 3v11L5 8.500z"/></svg></i>
                    <i><svg width="16" height="17" viewBox="0 0 16 17"><path d="M6 3v11l5-5.500z"/></svg></i>
                    <i><svg width="16" height="17" viewBox="0 0 16 17"><path d="M5 3v11l5-5.500zM11 3h1v11h-1z"/></svg></i>
                </div><span class="on">Модель</span><span class="ms">Motion Study 1</span>
            </div>
            <div class="side">
                <span class="on"><svg><use href="#house"/></svg></span><span><svg><use href="#books"/></svg></span><span><svg><use href="#folder"/></svg></span><span><svg><use href="#pal"/></svg></span><span><svg><use href="#ball"/></svg></span><span><svg><use href="#props"/></svg></span>
            </div>
        </div>

        <div class="pane">
            <div class="phead"><span class="chev">«</span><b>Ресурсы SolidWorks</b><svg width="17" height="17"><use href="#pin"/></svg></div>
            <div class="pbody">
                <div class="list">
                    <section class="s1"><h3>Введение</h3></section>
                    <section class="s2"><h3>Сообщество</h3>
                        <p><svg><use href="#portal"/></svg><a>Портал клиентов</a></p>
                        <p><svg><use href="#users"/></svg><a>Группы пользователей</a></p>
                        <p><svg><use href="#chat"/></svg><a>Форум для обсуждения</a></p>
                        <p class="two"><svg><use href="#rss"/></svg><a>Предупреждения по технической поддержке и<br>последние новости</a></p>
                    </section>
                    <section class="s3"><h3>Интерактивные ресурсы</h3>
                        <p class="fp"><svg><use href="#find"/></svg><a>Найти производителей деталей</a></p>
                        <div class="fin"><i></i><svg width="18" height="18" viewBox="0 0 18 18"><rect width="18" height="18" rx="2" fill="#1ea030"/><path d="M3 9h11M9 4l5 5-5 5" stroke="#fff" stroke-width="2" fill="none"/></svg></div>
                        <div class="ex">например, обработка, отливка. <u>Узнать подробнее</u></div>
                        <hr>
                        <p><svg><use href="#hands"/></svg><a>Решения партнеров</a></p>
                        <p><svg><use href="#labs"/></svg><a>SolidWorks Labs</a></p>
                    </section>
                    <section class="s4"><h3>Проектирование машины</h3>
                        <p><svg><use href="#qball"/></svg><a>Обзор проектирования машин</a></p>
                        <p><svg><use href="#cap"/></svg><a>Учебное пособие по проектированию машины</a></p>
                        <p><svg><use href="#sim"/></svg><a>SimulationXpress</a></p>
                    </section>
                    <section class="s5"><h3>Проектирование литейной формы</h3>
                        <p><svg><use href="#qball"/></svg><a>Обзор проектирования литейных форм</a></p>
                        <p class="two"><svg><use href="#cap"/></svg><a>Учебное пособие по проектированию литейных<br>форм</a></p>
                        <p><svg><use href="#open"/></svg><a>Импортировать файл</a></p>
                    </section>
                    <section class="s6"><h3>Проектирование потребительских товаров</h3>
                        <p><svg><use href="#cap"/></svg><a>Учебное пособие по потребительским товарам</a></p>
                    </section>
                    <div class="tip">
                        <svg class="lamp" width="38" height="66" viewBox="0 0 38 66"><path d="M11 46q0-8-5-15Q1 24 2 17 5 2 19 2t17 15q1 7-4 14-5 7-5 15z" fill="url(#gBulb)" stroke="#9094a0"/><path d="M15 46l-2-23h3l3 4 3-4h3l-2 23" fill="none" stroke="#8a8e98"/><path d="M11 46h16v13l-4 5h-8l-4-5z" fill="#777"/><path d="M11 49h16M11 53h16M12 57h14" stroke="#ddd"/></svg>
                        <section class="s7"><h3>Совет для новичков</h3><p>Используя клавиши Ctrl+Tab, Вы можете</p></section>
                    </div>
                </div>
                <div class="vs"><i class="up"></i><div class="vth"><em>≡</em></div><i class="dd"></i></div>
            </div>
            <div class="hs"><i class="al"></i><div class="hth">III</div><i class="ar"></i></div>
        </div>
    </div>

    <div class="status"><span class="st0">SolidWorks Premium 2011</span><span class="st1">Длина: 43мм</span><span class="st2">Определенный</span><span class="st3">Редактируется Сборка</span><span class="st4">?</span><svg width="16" height="16" viewBox="0 0 16 16"><path d="M1 9l7-7 6-1 1 5-8 9q-3 0-6-6z" fill="#f0c030" stroke="#7a5808"/><circle cx="11.500" cy="4" r="1.300" fill="#fff"/><path d="M5 8l4 4M7 6l4 4" stroke="#7a5808"/></svg></div>

    <div class="taskbar">
        <div class="start"><svg width="44" height="44" viewBox="0 0 44 44"><circle cx="22" cy="22" r="20.500" fill="url(#gTop)" stroke="#123c60"/><path d="M4 17Q10 3 22 3t18 14q-18-7-36 0z" fill="#fff" opacity=".35"/><path d="M13 12q5-3 9-1l-2 9q-4-2-9 1z" fill="#ee6428"/><path d="M24 12q5 2 10-1l-2 9q-5 3-10 1z" fill="#90c83c"/><path d="M11 23q4-3 9-1l-2 9q-4-2-9 1z" fill="#48a0e8"/><path d="M22 23q5 2 9-1l-2 10q-4 2-9 0z" fill="#f8cc30"/></svg></div>
        <span><svg viewBox="0 0 40 40"><path d="M10 5h24v30H10z" fill="#9fd0ec" stroke="#5a9cc8"/><path d="M4 5h26v31H4z" fill="#a4d4f0" stroke="#68a8d0"/><circle cx="16" cy="21" r="11.500" fill="#f08020" stroke="#fff"/><path d="M12 13l11 8-11 8z" fill="#fff"/></svg></span>
        <span class="mon"><svg viewBox="0 0 40 40"><path d="M2 15l9-5h4v19l-9 3-4-3z" fill="#d0d4d8" stroke="#777"/><path d="M12 3l25 1-2 25-23-4z" fill="#0c2c18" stroke="#c0c4c8" stroke-width="2"/><path d="M14 17l4-8 3 11 4-11 3 13 3-8h4" stroke="#30c040" fill="none"/><path d="M21 28h7v5h-7z" fill="#b8bcc0"/><ellipse cx="26" cy="34" rx="10" ry="3.500" fill="#d4d8dc"/></svg></span>
        <span class="run first"><svg viewBox="0 0 40 40"><circle cx="20" cy="20" r="18.500" fill="#f4f4f6"/><path d="M6 5q10 3 13 17Q20 8 33 5M19 18q2 10 0 20" stroke="#e81010" stroke-width="7.500" fill="none"/></svg></span>
        <span class="run"><svg viewBox="0 0 40 40"><circle cx="20" cy="20" r="17.500" fill="#e8c418"/><path d="M20 20L5 11a17.500 17.500 0 0 1 31 1H20z" fill="#d83428"/><path d="M20 20L5 11a17.500 17.500 0 0 0 13 26.500l6-12z" fill="#3ca848"/><circle cx="20" cy="20" r="8.500" fill="#fff"/><circle cx="20" cy="20" r="6.700" fill="#3474d0"/></svg></span>
        <span><svg viewBox="0 0 40 40"><rect x="7" y="2" width="26" height="36" rx="2" fill="#d4e6f4" stroke="#7090b0"/><path d="M10 5h20v12H10z" fill="#b0dcf8" stroke="#5880a8"/><path d="M9 21h22M9 26h22M9 31h22" stroke="#7ba4c8" stroke-width="3.400" stroke-dasharray="3 1.500"/><path d="M26 28h4v7h-4z" fill="#f0a020"/><text x="23" y="15" class="t9">0</text></svg></span>
        <span class="run"><svg viewBox="0 0 40 40"><path d="M34 27q-5 9-14 9-14-2-14-15T20 7q14 1 14 14H13" stroke="#38b4f0" stroke-width="6.500" fill="none"/><path d="M4 38Q-1 32 11 17 26 1 36 2q4 2-1 9" stroke="#f4cc30" stroke-width="3" fill="none"/></svg></span>
        <span><svg viewBox="0 0 40 40"><path d="M1 1h38v38H1z" fill="#e8eaec"/><path d="M1 1h38v10H1z" fill="#509848"/><path d="M4 3l4 5h22l6-5z" fill="#f8f8f8"/><circle cx="20" cy="26" r="9.500" fill="#c4c4c8"/><circle cx="19" cy="27" r="6" fill="#747478"/><circle cx="19" cy="28" r="3" fill="#5060b8"/></svg></span>
        <span class="run"><svg viewBox="0 0 40 40"><path d="M2 4h14l3 3h17v6H2z" fill="#f0d478" stroke="#b89430"/><path d="M6 4h9v4H6zM20 6h10v4H20z" fill="#fff"/><path d="M1 11h38v25H1z" fill="#f6e194" stroke="#c8a440"/><path d="M5 38V26q0-2 2-2h26q2 0 2 2v12h-5v-7H11v7z" fill="#8cd0f4" stroke="#5098c8"/></svg></span>
        <span><svg viewBox="0 0 40 40"><path d="M8 1h26l5 12H13z" fill="#f4c410" stroke="#222"/><path d="M39 13L28 38H14l12-25z" fill="#28a830" stroke="#222"/><path d="M8 1L1 15l13 23 7-13-7-12z" fill="#48c0f0" stroke="#222"/><path d="M14 13h12l-5 12z" fill="#fff"/></svg></span>
        <span><svg viewBox="0 0 40 40"><circle cx="20" cy="20" r="19" fill="#18843c" stroke="#fff" stroke-width="2"/><path d="M9 12l7 26M12 19q1 10 8 8 5-3 2-15M22 12q2 16 14 13" stroke="#fff" stroke-width="5" fill="none"/></svg></span>
        <span><svg viewBox="0 0 40 40"><path d="M2 24q2-14 16-15 16 0 17 14 0 12-17 12-3-5-9-3-7-1-7-8z" fill="#d4e8f4" stroke="#7098b8"/><circle cx="8" cy="22" r="2.800" fill="#d83c30"/><circle cx="13" cy="15" r="2.800" fill="#48b040"/><circle cx="21" cy="13" r="2.800" fill="#f0c020"/><circle cx="16" cy="25" r="3" fill="#48a0e8"/><path d="M21 38l11-27" stroke="#d88828" stroke-width="3"/><path d="M29 11l2-9 8 5-4 8z" fill="#c08040"/></svg></span>
        <span><svg viewBox="0 0 40 40"><circle cx="20" cy="20" r="18.500" fill="#eaf4fa" stroke="#5090c0"/><path d="M17 2h11l-6 14h8L19 36l2-15h-9z" fill="#2c6cc0"/></svg></span>
        <span><svg viewBox="0 0 40 40"><path d="M0 0h40v40H0z" fill="#f4f4f4"/><path d="M16 4l3 12v10l-4 2 12 1v7l-3 2H10v-6l5-14V6zM21 2h6v5h3v8h-8z" fill="#333"/><path d="M15 4v12M25 31l3 4" stroke="#b03828" stroke-width="2"/></svg></span>
        <span><svg viewBox="0 0 40 40"><path d="M0 0h40v40H0z" fill="#000"/><circle cx="20" cy="20" r="18" fill="#fff"/><path d="M14 16h18v13H14z" fill="#000"/><path d="M6 20h8v5H6z" fill="#fff" stroke="#333"/><path d="M17 8l2-5h3l1 5z" fill="#1010e0"/></svg></span>
        <span><svg viewBox="0 0 40 40"><path d="M7 5l15 4-5 20-15-4z" fill="#8cd8a0"/><path d="M9 10h18v20H9z" fill="#9cccf4"/><path d="M13 15l19-6 6 18-19 7z" fill="#f8e480" stroke="#d8c050"/></svg></span>
        <span><svg viewBox="0 0 40 40"><path d="M6 1h28v37H6z" fill="#2c343c" stroke="#101418"/><path d="M15 30q-6-13 1-25 10 6 12 14 3 9-4 14-6 1-6-3 1-7 9-6M16 10q-3 10 4 14M17 8q8 7 7 15" stroke="#e4e8ec" stroke-width="1.800" fill="none"/></svg></span>
        <span><svg viewBox="0 0 40 40"><rect x="2" y="2" width="36" height="36" rx="5" fill="#58585c" stroke="#aaa"/><path d="M3 30h34v4q0 4-4 4H7q-4 0-4-4z" fill="#b4b4b8"/><rect x="5" y="10" width="30" height="19" rx="2" fill="#18181c" stroke="#777"/><circle cx="20" cy="19" r="7" fill="#3a2c70"/><circle cx="18" cy="18" r="3" fill="#8068c8"/></svg></span>
        <span><svg viewBox="0 0 40 40"><path d="M0 0h40v40H0z" fill="#f08418"/><path d="M0 6v28l12-14z" fill="#c0c0f8"/><path d="M6 0l16 19L6 40h6l16-20L13 0z" fill="#30180c"/><path d="M20 0l17 20-17 20M29 0l11 14" stroke="#5a2c08" stroke-width="2" fill="none"/></svg></span>
        <span><svg viewBox="0 0 40 40"><rect x="1" y="6" width="38" height="27" rx="2" fill="#48a8d8" stroke="#90d4f0"/><circle cx="11" cy="16" r="5.500" fill="none" stroke="#d4f0fc" stroke-width="2"/><path d="M11 16v-6a6 6 0 0 1 6 6z" fill="#f09030"/><path d="M20 12h15M20 18h15M20 24h15" stroke="#d4f0fc" stroke-width="3"/><ellipse cx="20" cy="34" rx="9" ry="5" fill="#d0d4d8"/></svg></span>
        <span class="run"><svg viewBox="0 0 40 40"><path d="M19 1v12" stroke="#222" stroke-width="1.500"/><path d="M20 1q5 3 8 1t10 1v7q-5-3-10-1t-8 0z" fill="#1468b8"/><path d="M3 16l5-3 12 2 12-3 5 4v16l-10 6-14 1-10-6z" fill="#5c7c98" stroke="#24384c"/><path d="M15 15v22M27 15v22M4 20h32" stroke="#30465c"/><path d="M6 25q2-3 4 0v8H6zM18 26q3-4 6 0v10h-6zM30 24q2-3 4 0v8h-4z" fill="#1c2c3c"/></svg></span>
        <span class="run lite"><svg viewBox="0 0 40 40"><path d="M2 9l18-8 18 6v25l-18 7-18-7z" fill="#d01c20"/><path d="M2 9l18-8 18 6-18 5z" fill="#f05050"/><path d="M20 12v26" stroke="#800c10"/><path d="M14 16H6v6h8v7H5M24 16l2 13 4-10 3 8 3-13" stroke="#fff" stroke-width="2.800" fill="none"/></svg></span>
        <div class="tray">
            <svg width="10" height="6" viewBox="0 0 10 6"><path d="M5 0l5 6H0z" fill="#fff"/></svg>
            <svg width="18" height="20" viewBox="0 0 18 20"><path d="M1.500 1v18" stroke="#fff" stroke-width="2"/><path d="M3 2q4-1 6 1t8 1l-2 4 1 4q-4 1-6-1t-7-1z" fill="#fff"/></svg>
            <svg width="20" height="20" viewBox="0 0 20 20"><path d="M6 6h12v8H6zM12 14v4M8 18h8" fill="#234a80" stroke="#fff" stroke-width="1.600"/><path d="M1 1h5v6H1zM3.500 7v9H8" fill="#234a80" stroke="#fff" stroke-width="1.300"/></svg>
            <svg width="20" height="20" viewBox="0 0 20 20"><path d="M1 7h3l5-6v18l-5-6H1z" fill="#fff"/><path d="M12 7q2 3 0 6M14.500 5q4 5 0 10M17 3q5 7 0 14" stroke="#fff" fill="none"/></svg>
        </div>
        <div class="clock">14:24<br>20.06.2013</div>
        <div class="desk"></div>
    </div>

    <!-- coordinates window -->
    <div class="win coords">
        <div class="face">
            <label>X:</label><i>22.700</i><label></label><i>0.000</i>
            <label>Y:</label><i>-17.500</i><label></label><i>0.000</i>
            <label>Z:</label><i>10.000</i><label class="n">Шаг:</label><i>5012</i>
            <label class="n">Подача:</label><i>40000.000</i><label class="n">Время:</label><i class="c">0:50:16</i>
        </div>
    </div>

    <!-- simulation window -->
    <div class="win visual">
        <div class="wt"><svg width="19" height="20"><use href="#solidcam"/></svg><span>Визуализация</span></div>
        <div class="wb"><b class="h">?</b><b class="x"><svg width="16" height="14" viewBox="0 0 16 14"><path d="M2 1l12 12M14 1L2 13" stroke="#5a3030" stroke-width="5"/><path d="M2.500 1.500l11 11M13.500 1.500l-11 11" stroke="#fff" stroke-width="3"/></svg></b></div>
        <div class="face">
            <div class="vt">Визуализация на&nbsp; CAD Модели</div>
            <div class="vt half"><span>3D</span><span>2D</span></div>
            <div class="vt cut"><span>Визуализация остаточного материала</span></div>
            <div class="vt en">Rapid Verify</div>
            <div class="vt">Визуализация на станке</div>
            <div class="vt en">Solid Verify для 3D</div>
            <div class="vt front en">Solid Verify</div>
            <div class="page">
                <div class="chk top"><i class="ck"><svg width="13" height="13" viewBox="0 0 13 13"><path d="M2.500 6l3 4 5-8" stroke="#4a5c9c" stroke-width="2.200" fill="none"/></svg></i>Показ координат</div>
                <div class="pair">
                    <div class="btns"><button>Остановить...</button><button class="hot">Очистить</button></div>
                    <div class="grp"><div class="leg chk"><i class="ck"></i>Один цвет</div><button>Выбор цвета</button></div>
                </div>
                <div class="grp speed"><div class="leg">Скорость визуализации</div>
                    <div class="slider"><svg width="224" height="37" viewBox="0 0 224 37"><path d="M18.500 6v4M41.500 6v4M63.500 6v4M86.500 6v4M108.500 6v4M131.500 6v4M153.500 6v4M176.500 6v4M198.500 6v4M221.500 6v4" stroke="#b4b4b4"/><path d="M11.500 20.500h210v3h-210z" fill="#eee" stroke="#aaa"/><path d="M215.500 33V17l6-6 6 6v16z" fill="#e8e8e8" stroke="#777"/></svg></div>
                </div>
                <div class="play"><svg width="180" height="14" viewBox="0 0 180 14"><path d="M.5 1v12M4.500 1v12" stroke="#000"/><path d="M7 1l11 6-11 6zM33 1l11 6-11 6zM94 1l11 6-11 6zM125 1l11 6-11 6zM163 1l6 9h-11zM158 11h11v2h-11z"/><path d="M67 3h3v8h-3zM71.500 3h3v8h-3z" fill="#a0a0a0"/><path d="M106 1v12" stroke="#000" stroke-width="2"/><path d="M138 1v12M141 1v12" stroke="#000"/></svg></div>
            </div>
        </div>
    </div>
</body>
</html>
```
FILE: styles.css
```css
*{ margin: 0; padding: 0; box-sizing: border-box;}
body{ width: 1920px; height: 1080px; overflow: hidden; display: flex; flex-direction: column; position: relative; background-color: #e2e4ec; color: #111; font: 13px/17px "DejaVu Sans Condensed", "DejaVu Sans", sans-serif;}
svg{ display: block; flex: none;}
i, em{ font-style: normal;}
.sprite{ position: absolute; width: 0; height: 0;}
.t9{ font: 10px "Liberation Sans", sans-serif; fill: #246;}
.ax{ font: 17px "Liberation Sans", sans-serif;}

.dd{ display: block; flex: none; width: 5px; height: 4px; background-color: #333; clip-path: polygon(0 0, 100% 0, 50% 100%);}
.dd.dim{ background-color: #999;}
.ar{ display: block; width: 4px; height: 9px; background-color: #444; clip-path: polygon(0 0, 100% 50%, 0 100%);}
.al{ display: block; width: 4px; height: 9px; background-color: #444; clip-path: polygon(100% 0, 0 50%, 100% 100%);}
.up{ display: block; width: 8px; height: 4px; background-color: #444; clip-path: polygon(0 100%, 50% 0, 100% 100%);}

/* title bar */
.titlebar{ flex: none; height: 36px; display: flex; align-items: center; background: linear-gradient(#e2e2e3, #d2d3d6); border-bottom: 1px solid #5c5e68;}
.logo{ width: 125px; padding-left: 3px; display: flex; align-items: center; gap: 3px; color: #6a6c70; font-size: 16px; letter-spacing: .35px; white-space: nowrap;}
.grip{ width: 10px; height: 35px; padding-left: 3px; display: flex; align-items: center; background: linear-gradient(90deg, #a4a7c4 70%, #6c6f88);}
.quick{ width: 239px; padding-left: 35px; display: flex; align-items: center;}
.quick svg{ margin-right: 11.500px;}
.quick .dd{ margin-right: 8px;}
.select{ width: 42px; height: 29px; display: flex; border: 1px solid #75788c; border-radius: 4px; overflow: hidden; background-color: #dedfe6;}
.select span{ width: 28px; display: flex; align-items: center; justify-content: center; background-color: #b6b8d4;}
.select em{ flex: 1; display: flex; align-items: center; justify-content: center; border-left: 1px solid #75788c;}
.quick2{ width: 500px; padding-left: 9px; display: flex; align-items: center;}
.quick2 svg{ margin-right: 14px;}
.quick2 svg:nth-child(3){ margin-right: 9px;}
.doc-title{ width: 224px; padding: 1px 0 0 2px; text-align: center; font-size: 13.600px; color: #333; margin-right: 402px;}
.search{ width: 267px; height: 29px; padding: 0 6px 0 6px; margin-top: -1px; display: flex; align-items: center; justify-content: space-between; border: 1px solid #5c5e68; border-radius: 4px; background: linear-gradient(#ececf2, #fafafc); color: #555; font-size: 12.700px; white-space: nowrap;}
.search span{ margin-left: 3px;}
.search .dd{ width: 8px; height: 5px;}
.winbtn{ margin-top: -7px; padding-left: 10px; display: flex; align-items: center; color: #888a96;}
.winbtn b{ font-size: 16px; width: 21px;}
.winbtn .dd{ margin-right: 12px;}
.winbtn svg:nth-of-type(1), .winbtn svg:nth-of-type(2){ margin-right: 10px;}

/* ribbon */
.ribbon-row{ flex: none; height: 92px; display: flex; background-color: #c9ccdc;}
.ribbon{ width: 1861px; height: 92px; display: flex; background: linear-gradient(#fdfdfe 0, #f4f5f9 45%, #cfd1e0 100%); border-right: 1px solid #5c5e68; border-bottom: 2px solid #5a5d70; color: #262a66; font-size: 13.600px;}
.col{ padding-top: 3px;}
.c1{ width: 230px; padding-left: 5px;} .c2{ width: 175px; padding-left: 4px;} .c3{ width: 267px; padding-left: 5px;} .c4{ width: 199px; padding-left: 5px;}
.c5{ width: 227px; padding-left: 4px;} .c6{ width: 73px;} .c7{ width: 114px;} .c8{ width: 247px; padding-left: 3px;} .c9{ width: 82px;} .c10{ width: 74px;} .c11{ width: 103px;}
.cmd{ height: 29px; display: flex; align-items: center; white-space: nowrap;}
.cmd svg{ width: 17px; height: 17px; margin-right: 12px;}
.cmd .dd{ margin-left: auto; margin-right: 3px;}
.c2 .cmd .dd{ margin-right: 15px;}
.c8 .cmd svg{ margin-right: 13px;}
.c2, .c9, .c6{ letter-spacing: -.05px;}
.off{ color: #7c7d82;}
.sep{ border-left: 1px solid #c4c6d2;}
.big{ flex: none; padding-top: 7px; display: flex; flex-direction: column; align-items: center; text-align: center; white-space: nowrap;}
.big.low{ padding-top: 14px;}
.big svg{ width: 17px; height: 16px; margin-bottom: 1px;}
.big .dd{ margin-top: auto; margin-bottom: 9px;}
.big strong{ font: bold 11px/16px "Liberation Sans", sans-serif; color: #000; letter-spacing: -1px; margin-bottom: 1px;}
.more{ flex: 1; text-align: right; font-size: 16px; padding: 35px 1px 0 0; color: #444;}
.mini-in{ width: 58px; height: 31px; padding-left: 13px; display: flex; align-items: center; gap: 9px; background: linear-gradient(#f2f3f8, #cfd1e0); border-bottom: 2px solid #fff; font-size: 16px; color: #444;}

/* command tabs */
.main{ flex: 1; min-height: 0; display: flex;}
.work{ width: 1610px; display: flex; flex-direction: column; position: relative; background-color: #efefef;}
.tabs{ flex: none; height: 20px; display: flex; font: 15px/18px "Liberation Sans", sans-serif; color: #4c4e5a; white-space: nowrap;}
.tabs span{ height: 19px; overflow: hidden; text-align: center; background-color: #b9bccd; border-right: 1px solid #5a5d70; border-bottom: 1px solid #5a5d70;}
.tabs .t1{ width: 68px;} .tabs .t2{ width: 115px;} .tabs .t3{ width: 60px;} .tabs .t4{ width: 118px;} .tabs .t5{ width: 123px;}
.tabs .t6{ width: 156px; font-size: 14.600px;}
.tabs .on{ width: 167px; height: 20px; background-color: #e3e4ee; border: solid #5a5d70; border-width: 0 2px 2px 1px; font-size: 14.900px; font-weight: bold; line-height: 16px; color: #222;}
.panes{ flex: 1; min-height: 0; display: flex;}

/* feature tree */
.left{ width: 355px; display: flex; flex-direction: column; background-color: #fff; border-bottom: 2px solid #8a8da4;}
.ptabs{ flex: none; height: 29px; padding-top: 7px; display: flex; gap: 2px; background-color: #cdd1e5; border-top: 2px solid #9699ad; border-bottom: 1px solid #8a8da4;}
.ptabs span{ width: 26px; height: 21px; display: flex; align-items: center; justify-content: center; border: 1px solid #83869c; border-bottom: 0; border-radius: 3px 3px 0 0; background-color: #b6bace;}
.ptabs .on{ background-color: #fff; height: 22px;}
.ptabs svg{ width: 17px; height: 17px;}
.tree{ padding-top: 3px; position: relative; font-size: 12.850px; overflow: hidden;}
.guides{ position: absolute; left: 0; top: 0;}
.guides path{ fill: none; stroke: #777; stroke-dasharray: 1 1;}
.row{ height: 18px; padding-left: 8px; display: flex; align-items: center; white-space: nowrap; position: relative;}
.row svg{ width: 16px; height: 16px; margin-right: 7px;}
.row svg.i20{ width: 20px; margin-right: 5px;}
.row svg.i18{ width: 18px; margin: 0 7px 0 5px;}
.row.l1{ padding-left: 27px;} .row.l1 svg{ width: 17px; margin-right: 7px;} .row.l1 svg.i20{ width: 20px; margin-left: -1px; margin-right: 5px;}
.row.l2{ padding-left: 51px;}
.row.mac{ padding-left: 31px;} .row.mac .bx{ margin-right: 9px;}
.row.l3{ padding-left: 54px;}
.bx{ flex: none; width: 11px; height: 11px; margin-right: 7px; border: 1px solid #8c8c94; background: linear-gradient(#3a4a8c, #3a4a8c) center / 7px 1px no-repeat #fbfbfb;}
.bx.p{ background: linear-gradient(#3a4a8c, #3a4a8c) center / 7px 1px no-repeat, linear-gradient(#3a4a8c, #3a4a8c) center / 1px 7px no-repeat #fbfbfb;}
.cb{ flex: none; width: 11px; height: 11px; margin-top: -4px; border: 1px solid #777; background-color: #fff;}
.cb + svg{ margin-left: 7px;}
.row .far{ margin-left: 4px;}
.sel{ margin-left: -2px; padding: 0 2px; height: 18px; line-height: 18px; color: #fff; background-color: #3399ff;}
.split{ width: 10px; background: linear-gradient(90deg, #6d7086 2px, #e2e4ec 2px, #e2e4ec 7px, #83868f 8px, #fff 9px);}

/* graphics area */
.view{ flex: 1; min-width: 0; display: flex; flex-direction: column; border-right: 4px solid #e8e8e8;}
.menu{ flex: none; height: 28px; padding: 6px 0 0 121px; border-top: 1px solid #fff; margin-top: 2px; display: flex; gap: 17px; font: 14.800px/17px "DejaVu Sans Condensed", sans-serif; color: #a2a2a2;}
.tools{ flex: none; height: 29px; padding-left: 119px; display: flex; align-items: center; border-bottom: 1px solid #aaa;}
.tools.second{ height: 32px; padding: 0 0 1px 111px; border-top: 1px solid #fff; border-bottom: 2px solid #777;}
.b{ width: 23px; height: 21px; display: flex; align-items: center; justify-content: center;}
.b svg{ width: 17px; height: 17px;}
.b svg.cur{ width: 12px;}
.b.g{ font: 21px/20px "Liberation Serif", serif; color: #000; width: 24px;}
.b.dn{ border: 1px solid #555; border-radius: 3px; background-color: #e0e0e0;}
.tools u{ width: 1px; height: 19px; margin: 0 3px 0 4px; background-color: #8c8c8c;}
.scene{ flex: 1; overflow: hidden; background: linear-gradient(#52b6ff 0, #60bfff 8%, #a6d3f1 56%, #cfdfea 84%, #e6e7e8 98%);}

.btabs{ flex: none; height: 22px; border-top: 2px solid #111; display: flex; background-color: #e2e4ec; font: 14.300px/16px "Liberation Sans", sans-serif; color: #111;}
.nav{ width: 85px; padding-left: 2px; display: flex; gap: 1px;}
.nav i{ width: 18px; height: 19px; background-color: #b9bccd; border: 1px solid #9094a8;}
.nav path{ fill: #84879c;}
.btabs span{ text-align: center; height: 18px; border: solid #5a5d70; border-width: 0 2px 2px 0; background-color: #b9bccd;}
.btabs .on{ width: 85px; height: 19px; font-size: 15.300px; font-weight: bold; background-color: #dfe1ea; border-left-width: 1px;}
.btabs .ms{ width: 130px; padding-right: 8px;}

.side{ position: absolute; left: 1587px; top: 60px; width: 24px;}
.side span{ height: 23px; margin-bottom: 1px; display: flex; align-items: center; padding-left: 3px; border: 1px solid #70738a; border-radius: 3px 0 0 3px; background-color: #adb0c2;}
.side .on{ background-color: #e6e8f0; border-right: 0;}
.side svg{ width: 16px; height: 16px;}

/* task pane */
.pane{ width: 310px; display: flex; flex-direction: column; border-left: 2px solid #70738a; background-color: #e2e4ec;}
.phead{ flex: none; height: 25px; padding: 0 4px 0 10px; display: flex; align-items: center; background: linear-gradient(#eceef6, #c4c8dc); color: #2c2e64;}
.phead b{ flex: 1; padding-right: 4px; text-align: center; font-size: 14px; letter-spacing: -.05px;}
.chev{ font-size: 15px; color: #555;}
.pbody{ flex: 1; min-height: 0; display: flex;}
.list{ width: 293px; margin-right: 1px; padding: 5px 0 0 12px; overflow: hidden; font: 12.700px/16px "Liberation Sans", sans-serif; color: #0a0a50;}
section{ width: 300px; border: 1px solid #9195b0; border-radius: 4px; background: linear-gradient(#c2c8dc, #dfe3ef 90%);}
h3{ height: 23px; padding-left: 6px; border-bottom: 1px solid #a4a8bc; font: bold 12.700px/26px "Liberation Sans", sans-serif; letter-spacing: 1.420px; white-space: nowrap; color: #50546c; background: linear-gradient(#e2e4ea 0, #c9ccd6 45%, #b9bdca 52%, #d6d9e2 100%); border-radius: 3px 0 0 0;}
.s1{ height: 27px; margin-bottom: 23px;} .s2{ height: 144px; margin-bottom: 23px;} .s3{ height: 161px; margin-bottom: 23px;} .s4{ height: 107px; margin-bottom: 23px;} .s5{ height: 116px; margin-bottom: 23px;} .s6{ height: 53px; margin-bottom: 43px;}
section p{ height: 27px; padding: 4px 0 0 3px; display: flex; white-space: nowrap;}
section p svg{ width: 16px; height: 16px; margin: -2px 4px 0 0;}
section p a{ padding-top: 3px;}
section p.two{ height: 36px;}
section p.two a{ padding-top: 0; margin-top: -1px;}
.s2 .two svg{ margin-top: -1px;}
.s3 .fp{ height: 24px; padding-top: 4px; color: #000;}
.s3 .fp svg{ margin: -2px 11px 0 0;}
.s3 .fp a{ padding-top: 1px;}
.fin{ display: flex; align-items: center; gap: 7px; padding-left: 32px;}
.fin i{ width: 146px; height: 24px; background-color: #fff; border: 1px solid #e4e4e4; border-top: 2px solid #666; border-left: 2px solid #666;}
.ex{ padding: 2px 0 0 4px; white-space: nowrap; color: #6c7088; font-size: 12.450px;}
hr{ margin: 7px 20px 7px 16px; border: 0; height: 1px; background-color: #9297ac;}
.tip{ display: flex;}
.lamp{ margin: -1px -16px 0 10px; position: relative; z-index: 1;}
.s7{ margin: 23px 0 0; width: 270px; height: 50px;}
.s7 h3{ padding-left: 18px;}
.s7 p{ padding: 3px 0 0 20px; color: #000; letter-spacing: .05px;}
.vs{ width: 14px; padding: 6px 0; display: flex; flex-direction: column; align-items: center; background-color: #f0f0f2;}
.vth{ width: 14px; height: 760px; margin: 8px 0 auto; display: flex; align-items: center; justify-content: center; border: 1px solid #98989c; border-radius: 2px; background: linear-gradient(90deg, #f4f4f6, #cdced4); color: #555;}
.vs .dd{ width: 7px;}
.hs{ flex: none; height: 17px; width: 294px; padding: 0 8px 0 7px; display: flex; align-items: center; background-color: #ededf0;}
.hth{ width: 204px; height: 15px; margin: 0 auto 0 9px; text-align: center; font: 9px/13px "Liberation Sans", sans-serif; letter-spacing: 1px; border: 1px solid #98989c; border-radius: 2px; background: linear-gradient(#f4f4f6, #cdced4);}

/* status bar */
.status{ flex: none; height: 23px; display: flex; align-items: center; padding: 1px 14px 0 2px; border-top: 2px solid #5a5d70; border-bottom: 1px solid #335a80; background: linear-gradient(#c6cade, #c9cbdc 60%, #b2b4c0); font-size: 14.200px; white-space: nowrap;}
.st0{ width: 1413px; font-size: 14.700px;} .st1{ width: 100px; font-size: 14.500px;} .st2{ width: 125px; font-size: 14.700px;} .st3{ width: 187px;}
.st4{ width: 14px; height: 14px; margin: -5px auto 0 0; text-align: center; font: bold 13px/12px "Liberation Sans", sans-serif; color: #10902c; background-color: #f4f8fc; border: 1px solid #30688c;}
.status svg{ margin-top: -4px;}

/* taskbar */
.taskbar{ flex: none; height: 47px; display: flex; background: linear-gradient(52deg, transparent 68.600%, rgba(190, 220, 250, .7) 69.300%, transparent 70.200%), linear-gradient(90deg, #1268a8 0, #2090d4 7%, #28a8f0 20%, #2ea4f0 45%, #1c8cf0 62%, #1478e0 82%, #185a9c 86%, #1a4a84 100%);}
.start{ width: 67px; display: flex; align-items: center; justify-content: center;}
.taskbar span{ flex: none; width: 68px; height: 47px; margin: 0 1px; display: flex; align-items: center; justify-content: center; border-radius: 3px;}
.taskbar span.mon{ margin-left: 3px;}
.taskbar span.first{ margin-left: 2px;}
.taskbar span svg{ width: 40px; height: 40px;}
.taskbar .run{ border: 1px solid #b4e0f8; outline: 1px solid rgba(10, 50, 90, .5); background: linear-gradient(160deg, rgba(255, 255, 255, .55), rgba(255, 255, 255, .18) 60%, rgba(180, 230, 255, .35));}
.taskbar .lite{ background-color: rgba(255, 255, 255, .4);}
.tray{ margin-left: auto; width: 115px; display: flex; align-items: center; gap: 12px;}
.tray svg:first-child{ margin-right: 6px;}
.clock{ width: 98px; padding-top: 2px; text-align: center; color: #fff; font: 14px/22px "DejaVu Sans Condensed", sans-serif; letter-spacing: -.3px;}
.desk{ width: 14px; border: 1px solid #6c94bc; background-color: #245488;}

/* floating windows */
.win{ position: absolute; border: 1px solid #2c3440; border-radius: 7px; box-shadow: inset 0 0 0 1px rgba(255, 255, 255, .7), 0 2px 14px rgba(0, 0, 0, .65);}
.coords{ left: 207px; top: 113px; width: 272px; height: 194px; padding: 29px 7px 7px; background: linear-gradient(rgba(226, 232, 242, .7), rgba(170, 184, 204, .5) 12%, rgba(190, 204, 222, .6) 30%, rgba(230, 240, 252, .8)); backdrop-filter: blur(4px);}
.win .face{ border: 1px solid #596a80; background-color: #f0f0f0; box-shadow: 0 0 0 1px rgba(255, 255, 255, .7);}
.coords .face{ height: 156px; padding: 11px 0 0 0; display: grid; grid-template-columns: 59px 69px 46px 69px; grid-template-rows: 38px 36px 34px 27px; font-size: 12.100px;}
.coords label{ padding: 6px 0 0 16px;}
.coords label.n{ padding: 4px 0 0 4px;}
.coords .face label:nth-child(13){ padding-left: 5px;}
.coords i{ height: 27px; padding: 2px 0 0 4px; border: 1px solid #fff; border-top-color: #d8d8d8; border-left-color: #d8d8d8; white-space: nowrap;}
.coords .c{ padding-left: 13px;}

.visual{ left: 279px; top: 333px; width: 287px; height: 497px; padding: 0 7px; background: linear-gradient(90deg, #dbe7f2 0, #c2d6e8 25%, #6cbcf8 32%, #84c4f6 70%, #b8dcf8 100%);}
.wt{ height: 33px; padding: 3px 0 0 2px; display: flex; align-items: center; gap: 5px; font-size: 14px;}
.wt span{ text-shadow: 0 0 8px #fff, 0 0 8px #fff;}
.wb{ position: absolute; right: 7px; top: 0; display: flex; height: 24px; border: 1px solid #4c5c70; border-top: 0; border-radius: 0 0 4px 4px; overflow: hidden;}
.wb b{ display: flex; align-items: center; justify-content: center;}
.wb .h{ width: 34px; font-size: 18px; color: #fff; -webkit-text-stroke: .8px #445; background: linear-gradient(#c4dcf0 45%, #7098bc 50%, #8cc0e8);}
.wb .x{ width: 60px; border-left: 1px solid #4c3c50; background: linear-gradient(#dca49c 45%, #b8342c 50%, #d05c48);}
.visual .face{ height: 455px; padding: 11px 9px 0 9px; font: 14px/19px "Liberation Sans", sans-serif; color: #000;}
.vt{ height: 21px; width: 248px; margin-left: 2px; text-align: center; white-space: nowrap; letter-spacing: .15px; border: 1px solid #fff; border-right: 2px solid #777; border-bottom: 0;}
.vt.en{ letter-spacing: -.1px;}
.half{ display: flex;}
.half span{ flex: 1;}
.half span:first-child{ border-right: 2px solid #777;}
.cut span{ display: flex; justify-content: center; margin: 0 1px 0 5px; overflow: hidden; letter-spacing: .45px;}
.vt.front{ width: 253px; margin: -2px 0 0 0; height: 25px; padding-left: 5px; line-height: 22px; position: relative; background-color: #f0f0f0;}
.page{ width: 253px; height: 286px; padding-left: 13px; overflow: hidden; border: solid #777; border-width: 0 6px 2px 1px; border-color: #f0f0f0 #f0f0f0 #777 #fff; background-color: #fff; box-shadow: 2px 0 0 #777; font-size: 13.300px; letter-spacing: .55px;}
.chk{ display: flex; align-items: center; gap: 4px; white-space: nowrap;}
.chk.top{ padding-top: 10px;}
.ck{ flex: none; width: 15px; height: 15px; border: 1px solid #8c8e90; background-color: #f0f0f0;}
.pair{ display: flex; gap: 9px; padding: 15px 0 0 1px;}
.btns{ display: flex; flex-direction: column; gap: 10px;}
.page button{ flex: none; width: 108px; height: 28px; font: 13.500px "Liberation Sans", sans-serif; letter-spacing: .3px; white-space: nowrap; color: #000; border: 1px solid #707070; border-radius: 3px; background: linear-gradient(#f2f2f2 45%, #dcdcdc 50%, #cfcfcf);}
.page .hot{ border: 2px solid #3c98bc; background: linear-gradient(#e8f2f6 45%, #cfe0e8 50%, #c2d8e2); box-shadow: inset 0 0 2px #50d4f4;}
.grp{ width: 200px; height: 60px; padding-left: 6px; border: 1px solid #d8dce0; border-radius: 4px;}
.grp .leg{ width: 107px; margin-top: -7px; margin-left: 1px; height: 16px; line-height: 16px; background-color: #fff;}
.grp button{ width: 132px; margin-top: 13px;}
.speed{ width: 300px; margin: 17px 0 0 -1px; padding-left: 9px;}
.speed .leg{ width: 178px; margin-top: -9px; margin-left: -2px; height: 19px; padding-left: 5px;}
.slider{ width: 240px; height: 38px; margin-top: 2px; border: 1px solid #ddd; border-top: 2px solid #777; border-left: 2px solid #777;}
.play{ height: 58px; margin: 1px 0 0 -11px; padding: 10px 0 0 14px; border-top: 1px solid #888; background-color: #f0f0f0;}
```
